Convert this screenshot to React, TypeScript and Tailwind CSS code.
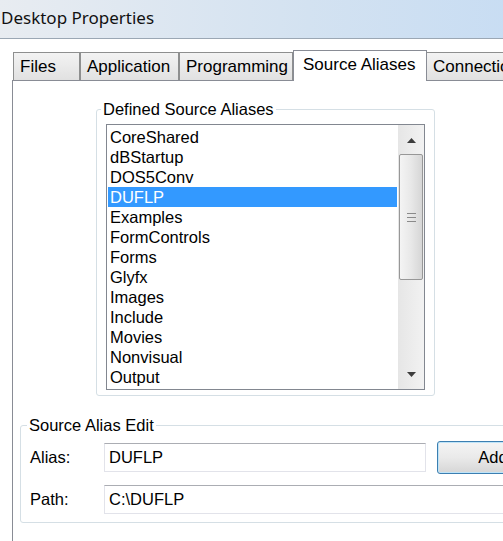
const aliases = [
  "CoreShared",
  "dBStartup",
  "DOS5Conv",
  "DUFLP",
  "Examples",
  "FormControls",
  "Forms",
  "Glyfx",
  "Images",
  "Include",
  "Movies",
  "Nonvisual",
  "Output",
];

const tabs = [
  { label: "Files", width: "w-[67px]" },
  { label: "Application", width: "w-[99px]" },
  { label: "Programming", width: "w-[114px]" },
  { label: "Source Aliases", width: "w-[134px]", active: true },
  { label: "Connections", width: "w-[110px] -ml-px" },
];

function Arrow({ up }: { up?: boolean }) {
  return (
    <svg width="9" height="5" viewBox="0 0 9 5">
      <polygon points={up ? "0,5 4.5,0 9,5" : "0,0 9,0 4.5,5"} fill="#3d3d3d" />
    </svg>
  );
}

function ScrollBar() {
  return (
    <div className="flex w-[26px] flex-col bg-gradient-to-r from-[#e6e6e6] to-[#f2f2f2]">
      <div className="flex h-[29px] items-center justify-center pt-[1px]">
        <Arrow up />
      </div>
      <div className="mx-[1px] flex h-[126px] flex-col items-center justify-center gap-[3px] rounded-[2px] border border-[#979797] bg-gradient-to-r from-[#f4f4f4] via-[#e8e8e8] to-[#d6d6d6]">
        <div className="h-px w-[9px] bg-[#8a8a8a]" />
        <div className="h-px w-[9px] bg-[#8a8a8a]" />
        <div className="h-px w-[9px] bg-[#8a8a8a]" />
      </div>
      <div className="flex-1" />
      <div className="flex h-[29px] items-center justify-center pb-[1px]">
        <Arrow />
      </div>
    </div>
  );
}

function TextBox({ value, width }: { value: string; width: string }) {
  return (
    <div
      className={`${width} flex h-[29px] items-center border border-[#e2e3ea] border-t-[#abadb3] bg-white pl-[4px] text-[16.5px] text-black`}
    >
      {value}
    </div>
  );
}

export default function App() {
  return (
    <div className="h-[541px] w-[503px] overflow-hidden bg-white font-['Liberation_Sans',Arial,sans-serif] text-black">
      <div className="flex h-full w-[620px] flex-col">
        {/* title bar */}
        <div className="flex h-[39px] items-center border-b border-[#9ba7b4] bg-gradient-to-r from-[#e8ecf1] via-[#d3e2f1] to-[#c2daf4] pb-[3px] pl-[1px]">
          <span className="font-['Noto_Sans',sans-serif] text-[17px] text-[#111]">
            Desktop Properties
          </span>
        </div>

        {/* tab strip */}
        <div className="ml-[13px] mt-[11px] flex h-[30px] items-end">
          {tabs.map((t) =>
            t.active ? (
              <div
                key={t.label}
                className={`${t.width} relative z-10 -mb-px flex h-[31px] items-center border border-b-0 border-[#898c95] bg-white pb-[2px] pl-[9px] text-[17px]`}
              >
                {t.label}
              </div>
            ) : (
              <div
                key={t.label}
                className={`${t.width} flex h-[28px] shrink-0 items-center border border-b-0 border-[#8e8f8f] bg-gradient-to-b from-[#f3f3f3] to-[#e1e1e1] pl-[6px] text-[17px] whitespace-nowrap`}
              >
                {t.label}
              </div>
            )
          )}
        </div>

        {/* tab panel */}
        <div className="ml-[12px] flex flex-1 flex-col border-l border-t border-[#898c95] bg-white">
          <fieldset className="ml-[83px] mt-[18px] w-[339px] rounded-[3px] border border-[#d5dfe5] pb-[5px]">
            <legend className="ml-[4px] px-[2px] text-[16.5px] leading-[20px]">
              Defined Source Aliases
            </legend>
            <div className="ml-[9px] mt-[5px] flex h-[266px] w-[319px] border border-[#828790] bg-white">
              <div className="flex-1 overflow-hidden px-[1px] pt-[2px]">
                {aliases.map((a) => (
                  <div
                    key={a}
                    className={`flex h-[20px] items-center pl-[2px] text-[16.5px] ${
                      a === "DUFLP" ? "bg-[#3399ff] text-white" : ""
                    }`}
                  >
                    {a}
                  </div>
                ))}
              </div>
              <ScrollBar />
            </div>
          </fieldset>

          <fieldset className="ml-[7px] mt-[19px] w-[580px] rounded-[3px] border border-[#d5dfe5] pb-[8px]">
            <legend className="ml-[6px] px-[2px] text-[16.5px] leading-[20px]">
              Source Alias Edit
            </legend>
            <div className="mt-[6px] flex h-[33px] items-center">
              <span className="w-[83px] pl-[9px] text-[16.5px]">Alias:</span>
              <TextBox value="DUFLP" width="w-[322px]" />
              <button className="ml-[11px] h-[33px] w-[112px] rounded-[3px] border border-[#3c7fb1] bg-gradient-to-b from-[#f4f4f4] via-[#eaeaea] to-[#d6d6d6] text-[16.5px] shadow-[inset_0_0_0_1px_#bfe4f8]">
                Add
              </button>
            </div>
            <div className="mt-[11px] flex items-center">
              <span className="w-[83px] pl-[9px] text-[16.5px]">Path:</span>
              <TextBox value="C:\DUFLP" width="w-[460px]" />
            </div>
          </fieldset>
        </div>
      </div>
    </div>
  );
}
